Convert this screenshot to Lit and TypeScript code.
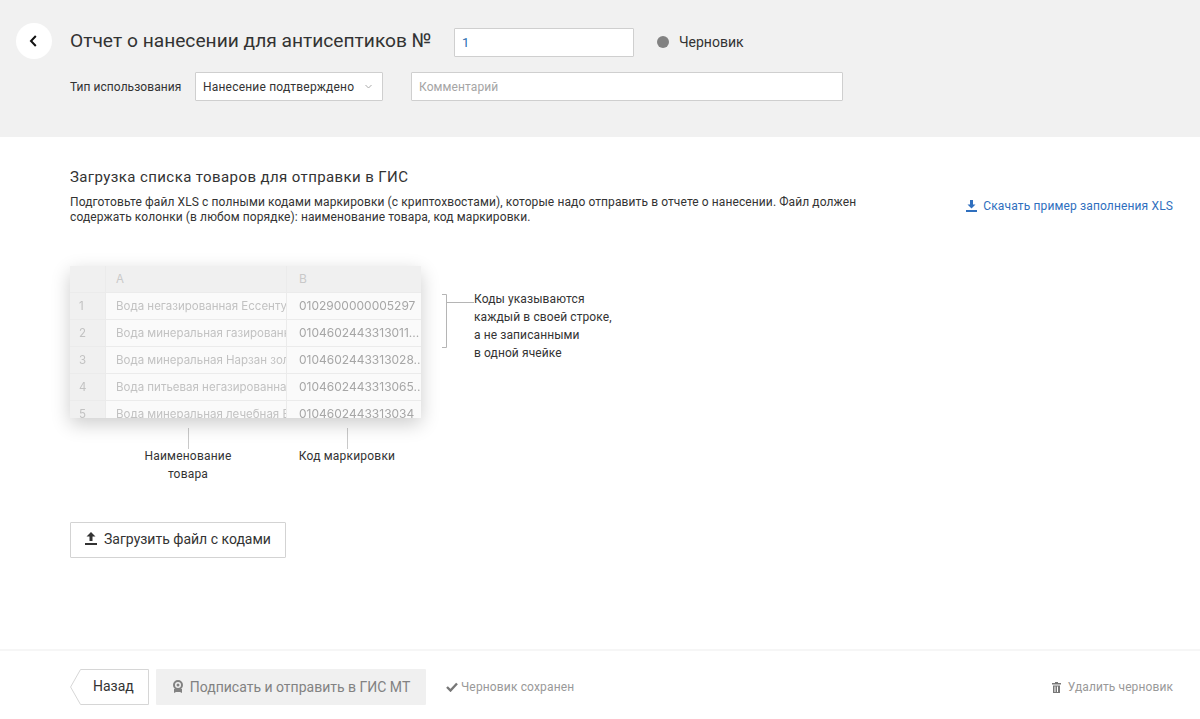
import { LitElement, html, css } from "lit";
import { customElement } from "lit/decorators.js";

const rows = [
  ["1", "Вода негазированная Ессентуки", "0102900000005297"],
  ["2", "Вода минеральная газированная", "0104602443313011..."],
  ["3", "Вода минеральная Нарзан золотой", "0104602443313028..."],
  ["4", "Вода питьевая негазированная", "0104602443313065..."],
  ["5", "Вода минеральная лечебная Боржоми", "0104602443313034"],
];

@customElement("app-root")
export class AppRoot extends LitElement {
  static styles = css`
    :host { display: flex; flex-direction: column; height: 719px; background: #fff; color: #333;
      font-family: Roboto, "Noto Sans", sans-serif; font-size: 12px; letter-spacing: .1px; overflow: hidden; }
    * { box-sizing: border-box; }
    .head { height: 137px; background: #f1f1f1; flex: none; padding: 23px 0 0 16px; display: flex; gap: 18px; }
    .circle { width: 36px; height: 36px; border-radius: 50%; background: #fff; display: flex; align-items: center; justify-content: center; flex: none; }
    .head-body { display: flex; flex-direction: column; gap: 15px; padding-top: 5px; }
    .r1 { display: flex; align-items: center; height: 29px; }
    .title { font-size: 19.2px; letter-spacing: 0; width: 384px; white-space: nowrap; line-height: 24px; margin-top: -3px; }
    .field { height: 29px; background: #fff; border: 1px solid #cfcfcf; border-radius: 1px; padding: 0 7px; display: flex; align-items: center; }
    .num { width: 180px; color: #2a6cb0; font-size: 13px; }
    .dot { width: 12px; height: 12px; border-radius: 50%; background: #828282; margin: -2px 10px 0 23px; }
    .status { font-size: 14px; letter-spacing: 0; margin-top: -2px; }
    .r2 { display: flex; align-items: center; }
    .lbl { width: 125px; white-space: nowrap; letter-spacing: .05px; }
    .select { width: 188px; justify-content: space-between; padding-right: 10px; letter-spacing: .2px; }
    .comment { width: 432px; margin-left: 28px; color: #a5a5a5; }
    .main { flex: 1; padding: 32px 27px 0 70px; min-height: 0; }
    h2 { margin: 0; font-weight: 400; font-size: 15px; line-height: 16px; letter-spacing: .4px; }
    .intro { display: flex; justify-content: space-between; margin-top: 10px; }
    .desc { width: 800px; line-height: 15px; }
    .dl { display: flex; align-items: center; gap: 6px; color: #2f6fbe; height: 20px; margin-top: 1px; white-space: nowrap; letter-spacing: .14px; }
    .diagram { margin-top: 41px; }
    .top { display: flex; align-items: flex-start; }
    .sheet { width: 351px; height: 152px; overflow: hidden; background: #fafafa; box-shadow: 0 6px 18px rgba(0,0,0,.2); flex: none; font-family: Inter, sans-serif; letter-spacing: 0; font-size: 12px; filter: blur(.4px); }
    .tr { display: grid; grid-template-columns: 36px 181px 134px; height: 27px; border-bottom: 1px solid #ebebeb; }
    .tr.h { background: #f0f0f0; }
    .tr > div { overflow: hidden; white-space: nowrap; line-height: 26px; padding-left: 10px; font-size: 11.5px; color: #c2c2c2; border-right: 1px solid #ebebeb; }
    .tr > div:first-child { background: #f0f0f0; padding-left: 9px; }
    .tr > div:last-child { color: #a6a6a6; font-size: 12px; padding-left: 12px; border-right: 0; }
    .tr.h > div { color: #c9c9c9; }
    .brk { margin: 28px 0 0 21px; flex: none; display: block; }
    .note { line-height: 18px; margin-top: 24px; white-space: nowrap; letter-spacing: .1px; }
    .labels { display: flex; padding-left: 68px; margin-top: 10px; line-height: 18px; text-align: center; letter-spacing: .2px; }
    .lab { display: flex; flex-direction: column; align-items: center; }
    .lab i { width: 1px; height: 21px; background: #c9c9c9; margin-bottom: -2px; }
    .l1 { width: 100px; } .l2 { width: 120px; margin-left: 49px; }
    .upload { margin-top: 39px; width: 216px; height: 36px; border: 1px solid #d3d3d3; border-radius: 1px; padding-bottom: 3px; display: flex; align-items: center; justify-content: center; gap: 7px; font-size: 14px; letter-spacing: 0; }
    .foot { height: 70px; flex: none; border-top: 2px solid #f6f6f6; padding: 18px 27px 0 70px; display: flex; align-items: flex-start; }
    .back { width: 79px; height: 36px; display: block; position: relative; flex: none; font-size: 14px; letter-spacing: 0; }
    .back svg { display: block; }
    .back span { position: absolute; left: 23px; top: 0; line-height: 35px; }
    .sign { margin-left: 7px; width: 270px; height: 36px; background: #f0f0f0; border-radius: 1px; display: flex; align-items: center; justify-content: center; gap: 6px; color: #828282; font-size: 14px; letter-spacing: 0; }
    .saved { margin-left: 20px; height: 36px; display: flex; align-items: center; gap: 3px; color: #999; letter-spacing: .15px; }
    .del { margin-left: auto; height: 36px; display: flex; align-items: center; gap: 7px; color: #999; letter-spacing: .1px; }
  `;

  render() {
    return html`
      <div class="head">
        <div class="circle"><svg width="10" height="14" viewBox="0 0 10 14"><path d="M6.800 2 2 7l4.800 5" fill="none" stroke="#111" stroke-width="2"/></svg></div>
        <div class="head-body">
          <div class="r1">
            <div class="title">Отчет о нанесении для антисептиков №</div>
            <div class="field num">1</div>
            <span class="dot"></span><span class="status">Черновик</span>
          </div>
          <div class="r2">
            <div class="lbl">Тип использования</div>
            <div class="field select"><span>Нанесение подтверждено</span>
              <svg width="7" height="5" viewBox="0 0 7 5"><path d="M.5 1l3 3 3-3" fill="none" stroke="#aaa" stroke-width="1"/></svg></div>
            <div class="field comment">Комментарий</div>
          </div>
        </div>
      </div>
      <div class="main">
        <h2>Загрузка списка товаров для отправки в ГИС</h2>
        <div class="intro">
          <div class="desc">Подготовьте файл XLS с полными кодами маркировки (с криптохвостами), которые надо отправить в отчете о нанесении. Файл должен содержать колонки (в любом порядке): наименование товара, код маркировки.</div>
          <div class="dl"><svg width="11" height="12" viewBox="0 0 11 12"><path d="M4 0h3v4.500h2.500L5.500 8.500 1.500 4.500H4zM0 10h11v2H0z" fill="#2f6fbe"/></svg>Скачать пример заполнения XLS</div>
        </div>
        <div class="diagram">
          <div class="top">
            <div class="sheet">
              <div class="tr h"><div></div><div>A</div><div>B</div></div>
              ${rows.map((r) => html`<div class="tr"><div>${r[0]}</div><div>${r[1]}</div><div>${r[2]}</div></div>`)}
            </div>
            <svg class="brk" width="32" height="54" viewBox="0 0 32 54"><path d="M0 .5h4.500v53H0M4.500 8.500H32" fill="none" stroke="#b5b5b5"/></svg>
            <div class="note">Коды указываются<br>каждый в своей строке,<br>а не записанными<br>в одной ячейке</div>
          </div>
          <div class="labels">
            <div class="lab l1"><i></i>Наименование товара</div>
            <div class="lab l2"><i></i>Код маркировки</div>
          </div>
        </div>
        <div class="upload"><svg width="12" height="13" viewBox="0 0 12 13"><path d="M4.500 9V4.500H1.500L6 0l4.500 4.500h-3V9zM0 11h12v2H0z" fill="#333"/></svg>Загрузить файл с кодами</div>
      </div>
      <div class="foot">
        <div class="back"><svg width="79" height="36" viewBox="0 0 79 36"><path d="M78.500.5H10.500L.6 18l9.900 17.500h68z" fill="#fff" stroke="#d6d6d6"/></svg><span>Назад</span></div>
        <div class="sign"><svg width="12" height="14" viewBox="0 0 12 14"><circle cx="6" cy="5" r="4" fill="none" stroke="#828282" stroke-width="2"/><circle cx="6" cy="5" r="1.500" fill="#828282"/><path d="M2 9v4l2-1h4l2 1V9z" fill="#828282"/></svg>Подписать и отправить в ГИС МТ</div>
        <div class="saved"><svg width="12" height="10" viewBox="0 0 12 10"><path d="M1 5l3.500 3.500L11 1.500" fill="none" stroke="#777" stroke-width="2.400"/></svg>Черновик сохранен</div>
        <div class="del"><svg width="9" height="11" viewBox="0 0 9 11"><path d="M3 0h3v1h3v1.500H0V1h3zM1 3.500h7V11H1zM2.500 4.500v5.500h1V4.500zM5 4.500v5.500h1V4.500z" fill="#777" fill-rule="evenodd"/></svg>Удалить черновик</div>
      </div>
    `;
  }
}
